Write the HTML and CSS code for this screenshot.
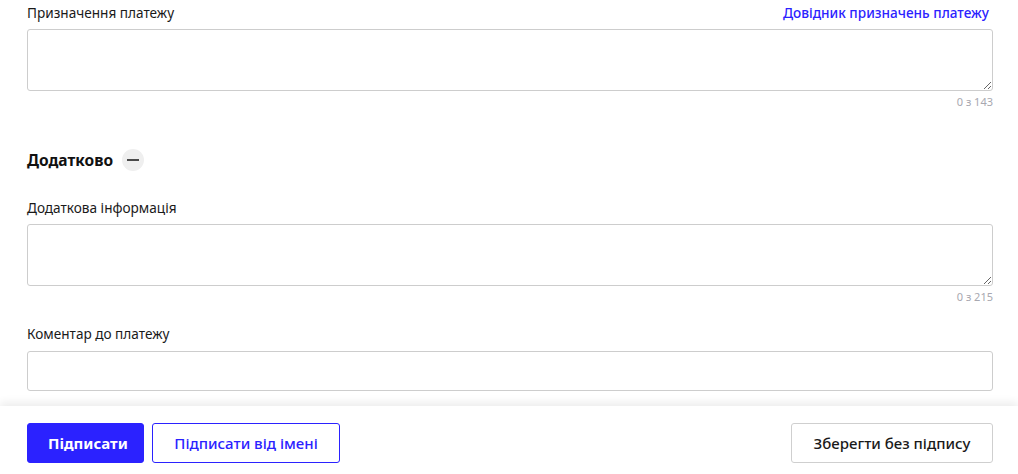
FILE: index.html
```html
<!DOCTYPE html>
<html lang="uk">
<head>
    <meta charset="UTF-8">
    <meta name="viewport" content="width=device-width, initial-scale=1.0">
    <title>Платіж</title>
    <link rel="stylesheet" href="styles.css">
</head>
<body>
    <div class="page">
        <div class="content">
            <div class="field">
                <div class="field-head">
                    <label class="label" for="purpose">Призначення платежу</label>
                    <a class="link" href="#">Довідник призначень платежу</a>
                </div>
                <textarea id="purpose" class="textarea"></textarea>
                <div class="counter">0 з 143</div>
            </div>

            <div class="section-title">
                <span>Додатково</span>
                <button class="collapse-btn" type="button"><span class="minus"></span></button>
            </div>

            <div class="field field-extra">
                <div class="field-head">
                    <label class="label" for="extra">Додаткова інформація</label>
                </div>
                <textarea id="extra" class="textarea"></textarea>
                <div class="counter">0 з 215</div>
            </div>

            <div class="field field-comment">
                <div class="field-head">
                    <label class="label" for="comment">Коментар до платежу</label>
                </div>
                <input id="comment" class="input" type="text">
            </div>
        </div>

        <div class="footer">
            <div class="footer-left">
                <button class="btn btn-primary">Підписати</button>
                <button class="btn btn-outline">Підписати від імені</button>
            </div>
            <button class="btn btn-default">Зберегти без підпису</button>
        </div>
    </div>
</body>
</html>
```

FILE: styles.css
```css
body {
    font-family: "Noto Sans", "Open Sans", Arial, sans-serif;
    margin: 0;
    padding: 0;
    color: #1a1a1a;
    background: #fff;
}

.page {
    height: 474px;
    display: flex;
    flex-direction: column;
    overflow: hidden;
}

.content {
    flex: 1;
    padding: 3px 25px 0 27px;
    overflow: hidden;
}

.field-head {
    display: flex;
    justify-content: space-between;
    align-items: center;
    height: 18px;
    margin-bottom: 8px;
}

.label {
    font-size: 13.6px;
    color: #1a1a1a;
}

.link {
    font-size: 13.6px;
    font-weight: 500;
    color: #2b22ff;
    text-decoration: none;
    margin-right: 4px;
}

.textarea {
    display: block;
    width: 100%;
    height: 62px;
    box-sizing: border-box;
    border: 1px solid #cdcdcd;
    border-radius: 3px;
    padding: 8px 10px;
    font-family: inherit;
    font-size: 13px;
    resize: vertical;
    margin: 0;
}

.counter {
    text-align: right;
    font-size: 11px;
    color: #a8a8b0;
    line-height: 14px;
    margin-top: 4px;
}

.section-title {
    display: flex;
    align-items: center;
    gap: 9px;
    margin-top: 40px;
    height: 22px;
    font-size: 15.5px;
    font-weight: 700;
    color: #111;
}

.collapse-btn {
    width: 22px;
    height: 22px;
    border-radius: 50%;
    border: none;
    background: #efefef;
    padding: 0;
    cursor: pointer;
    display: flex;
    align-items: center;
    justify-content: center;
}

.minus {
    display: block;
    width: 12px;
    height: 2px;
    background: #4a4a4a;
}

.field-extra {
    margin-top: 27px;
}

.field-comment {
    margin-top: 20px;
}

.field-comment .field-head {
    margin-bottom: 9px;
}

.input {
    display: block;
    width: 100%;
    height: 40px;
    box-sizing: border-box;
    border: 1px solid #cdcdcd;
    border-radius: 3px;
    padding: 0 10px;
    font-family: inherit;
    font-size: 13px;
    margin: 0;
}

.footer {
    height: 68px;
    box-sizing: border-box;
    padding: 17px 25px 11px 27px;
    display: flex;
    justify-content: space-between;
    align-items: flex-start;
    background: #fff;
    box-shadow: 0 -4px 8px rgba(0, 0, 0, 0.07);
    position: relative;
}

.footer-left {
    display: flex;
    gap: 8px;
}

.btn {
    height: 40px;
    box-sizing: border-box;
    border-radius: 3px;
    font-family: inherit;
    font-size: 15px;
    padding: 0 20px;
    cursor: pointer;
    background: #fff;
}

.btn-primary {
    width: 117px;
    background: #2b22ff;
    border: 1px solid #2b22ff;
    color: #fff;
    font-weight: 700;
}

.btn-outline {
    width: 188px;
    border: 1px solid #2b22ff;
    color: #2b22ff;
    font-weight: 500;
}

.btn-default {
    width: 202px;
    border: 1px solid #cfcfcf;
    color: #1a1a1a;
    font-weight: 500;
}
```
